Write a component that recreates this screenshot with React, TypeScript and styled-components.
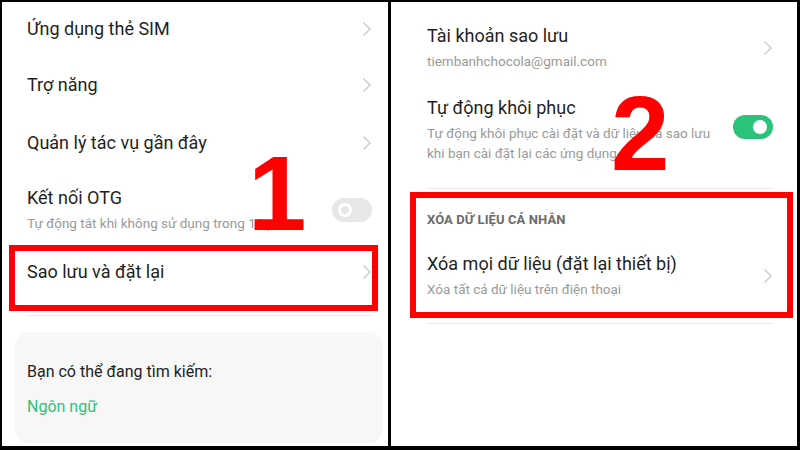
import React from 'react'
import styled, { createGlobalStyle } from 'styled-components'

const GlobalStyle = createGlobalStyle`
    html, body {
        margin: 0;
        padding: 0;
        background: #000;
    }
    body {
        font-family: Roboto, 'Noto Sans', 'Liberation Sans', sans-serif;
        color: #1f1f1f;
    }
`

const Frame = styled.div`
    position: relative;
    width: 800px;
    height: 450px;
    box-sizing: border-box;
    padding: 2px 3px 4px 2px;
    display: grid;
    grid-template-columns: 386px 406px;
    column-gap: 3px;
    background: #000;
    overflow: hidden;
`

const Panel = styled.div<{ $padLeft: number; $padRight: number }>`
    background: #fff;
    display: flex;
    flex-direction: column;
    padding: 0 ${(p) => p.$padRight}px 0 ${(p) => p.$padLeft}px;
    overflow: hidden;
`

const Row = styled.div<{ $height: number; $padTop?: number; $align?: string }>`
    position: relative;
    height: ${(p) => p.$height}px;
    box-sizing: border-box;
    padding-top: ${(p) => p.$padTop ?? 0}px;
    display: flex;
    align-items: ${(p) => p.$align ?? 'center'};
    justify-content: space-between;
    flex-shrink: 0;
`

const TextBlock = styled.div`
    display: flex;
    flex-direction: column;
`

const Title = styled.div`
    font-size: 18px;
    line-height: 22px;
    color: #1f1f1f;
    white-space: nowrap;
`

const Sub = styled.div`
    margin-top: 4px;
    font-size: 13.5px;
    line-height: 20px;
    color: #9a9a9a;
    white-space: nowrap;
`

const Divider = styled.div<{ $top: number }>`
    margin-top: ${(p) => p.$top}px;
    height: 1px;
    background: #e8e8e8;
    flex-shrink: 0;
`

const Toggle = styled.div<{ $on?: boolean }>`
    width: 40px;
    height: 24px;
    border-radius: 12px;
    background: ${(p) => (p.$on ? '#2bc37c' : '#e7e7e7')};
    display: flex;
    align-items: center;
    justify-content: ${(p) => (p.$on ? 'flex-end' : 'flex-start')};
    padding: 0 5px;
    box-sizing: border-box;
    flex-shrink: 0;
`

const Knob = styled.div<{ $on?: boolean }>`
    width: 14px;
    height: 14px;
    border-radius: 50%;
    box-sizing: border-box;
    background: ${(p) => (p.$on ? '#fff' : '#e7e7e7')};
    border: ${(p) => (p.$on ? 'none' : '3px solid #fff')};
    margin: 0 1px;
`

const Highlight = styled.div<{ $t: number; $r: number; $b: number; $l: number }>`
    position: absolute;
    top: ${(p) => p.$t}px;
    right: ${(p) => p.$r}px;
    bottom: ${(p) => p.$b}px;
    left: ${(p) => p.$l}px;
    border: 6px solid #ff0000;
    pointer-events: none;
`

const SuggestCard = styled.div`
    margin: 16px -11px 0 -12px;
    height: 111px;
    border-radius: 14px;
    background: #f7f7f7;
    padding: 0 12px;
    display: flex;
    flex-direction: column;
    flex-shrink: 0;
`

const SuggestLabel = styled.div`
    margin-top: 30px;
    font-size: 16px;
    line-height: 20px;
    color: #222;
`

const SuggestLink = styled.div`
    margin-top: 15px;
    font-size: 16px;
    line-height: 20px;
    color: #2dc27a;
`

const Section = styled.div`
    position: relative;
    display: flex;
    flex-direction: column;
    flex-shrink: 0;
`

const SectionHeader = styled.div`
    padding-top: 23px;
    font-size: 13px;
    line-height: 16px;
    font-weight: 700;
    color: #6a6a6a;
    letter-spacing: 0.1px;
`

const BigNumber = styled.span<{ $x: number; $y: number }>`
    position: absolute;
    left: ${(p) => p.$x}px;
    top: ${(p) => p.$y}px;
    font-family: 'Liberation Sans', Arial, sans-serif;
    font-weight: 700;
    font-size: 105px;
    line-height: 1;
    color: #ff0000;
`

const Chevron = () => (
    <svg width="10" height="16" viewBox="0 0 10 16" style={{ flexShrink: 0 }}>
        <path d="M1.5 1.5 L8 8 L1.5 14.5" fill="none" stroke="#c9c9c9" strokeWidth="1.4" />
    </svg>
)

const App = () => {
    return (
        <>
            <GlobalStyle />
            <Frame>
                <Panel $padLeft={25} $padRight={16}>
                    <Row $height={54}>
                        <Title>Ứng dụng thẻ SIM</Title>
                        <Chevron />
                    </Row>
                    <Row $height={58}>
                        <Title>Trợ năng</Title>
                        <Chevron />
                    </Row>
                    <Row $height={58}>
                        <Title>Quản lý tác vụ gần đây</Title>
                        <Chevron />
                    </Row>
                    <Row $height={74} $padTop={2}>
                        <TextBlock>
                            <Title>Kết nối OTG</Title>
                            <Sub>Tự động tắt khi không sử dụng trong 10 phút</Sub>
                        </TextBlock>
                        <Toggle>
                            <Knob />
                        </Toggle>
                    </Row>
                    <Row $height={52}>
                        <Title>Sao lưu và đặt lại</Title>
                        <Chevron />
                        <Highlight $t={-1} $r={-6} $b={-13} $l={-18} />
                    </Row>
                    <Divider $top={17} />
                    <SuggestCard>
                        <SuggestLabel>Bạn có thể đang tìm kiếm:</SuggestLabel>
                        <SuggestLink>Ngôn ngữ</SuggestLink>
                    </SuggestCard>
                </Panel>

                <Panel $padLeft={36} $padRight={24}>
                    <Row $height={92}>
                        <TextBlock>
                            <Title>Tài khoản sao lưu</Title>
                            <Sub>tiembanhchocola@gmail.com</Sub>
                        </TextBlock>
                        <Chevron />
                    </Row>
                    <Row $height={94} $padTop={3} $align="flex-start">
                        <TextBlock>
                            <Title>Tự động khôi phục</Title>
                            <Sub>
                                Tự động khôi phục cài đặt và dữ liệu đã sao lưu
                                <br />
                                khi bạn cài đặt lại các ứng dụng.
                            </Sub>
                        </TextBlock>
                        <Toggle $on style={{ marginTop: 18 }}>
                            <Knob $on />
                        </Toggle>
                    </Row>
                    <Divider $top={0} />
                    <Section>
                        <SectionHeader>XÓA DỮ LIỆU CÁ NHÂN</SectionHeader>
                        <Row $height={95} $padTop={0}>
                            <TextBlock>
                                <Title>Xóa mọi dữ liệu (đặt lại thiết bị)</Title>
                                <Sub>Xóa tất cả dữ liệu trên điện thoại</Sub>
                            </TextBlock>
                            <Chevron />
                        </Row>
                        <Highlight $t={3} $r={-20} $b={5} $l={-17} />
                    </Section>
                    <Divider $top={0} />
                </Panel>

                <BigNumber $x={248} $y={141}>1</BigNumber>
                <BigNumber $x={611} $y={81}>2</BigNumber>
            </Frame>
        </>
    )
}

export default App
